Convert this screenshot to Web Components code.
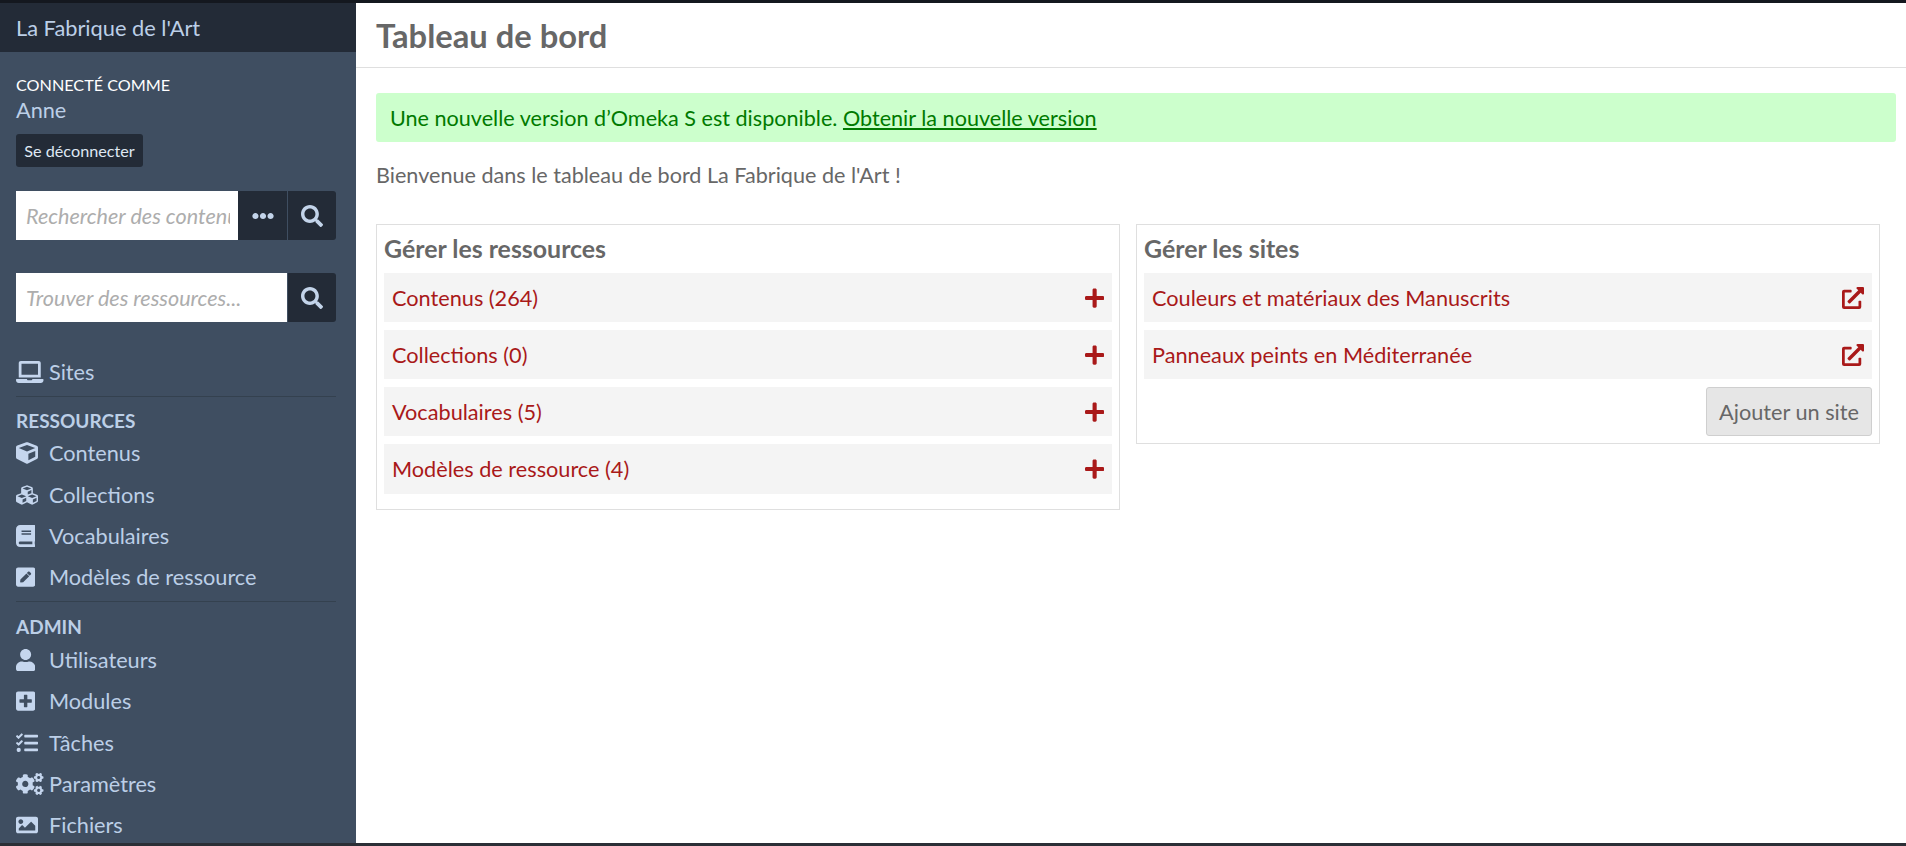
<!DOCTYPE html>
<html lang="fr">
<head>
<meta charset="utf-8">
<title>Tableau de bord</title>
<style>
    html, body { margin: 0; height: 100%; overflow: hidden; background: #fff; }
    body { font-family: Lato, "Open Sans", sans-serif; color: #676767; }
</style>
</head>
<body>
<admin-app>
    <admin-sidebar slot="sidebar" brand="La Fabrique de l'Art" user="Anne">
        <side-search placeholder="Rechercher des contenus" options></side-search>
        <side-search class="second" placeholder="Trouver des ressources..."></side-search>

        <nav-group>
            <nav-item icon="laptop">Sites</nav-item>
        </nav-group>
        <nav-group label="Ressources">
            <nav-item icon="cube">Contenus</nav-item>
            <nav-item icon="cubes">Collections</nav-item>
            <nav-item icon="book">Vocabulaires</nav-item>
            <nav-item icon="pen-square">Modèles de ressource</nav-item>
        </nav-group>
        <nav-group label="Admin">
            <nav-item icon="user">Utilisateurs</nav-item>
            <nav-item icon="plus-square">Modules</nav-item>
            <nav-item icon="tasks">Tâches</nav-item>
            <nav-item icon="cogs">Paramètres</nav-item>
            <nav-item icon="image">Fichiers</nav-item>
        </nav-group>
    </admin-sidebar>

    <page-title>Tableau de bord</page-title>
    <page-body>
        <update-alert link="Obtenir la nouvelle version">Une nouvelle version d’Omeka S est disponible.</update-alert>
        <p>Bienvenue dans le tableau de bord La Fabrique de l'Art !</p>
        <card-grid>
            <dash-card heading="Gérer les ressources">
                <dash-row icon="plus">Contenus (264)</dash-row>
                <dash-row icon="plus">Collections (0)</dash-row>
                <dash-row icon="plus">Vocabulaires (5)</dash-row>
                <dash-row icon="plus" class="tall">Modèles de ressource (4)</dash-row>
            </dash-card>
            <dash-card heading="Gérer les sites">
                <dash-row icon="external">Couleurs et matériaux des Manuscrits</dash-row>
                <dash-row icon="external">Panneaux peints en Méditerranée</dash-row>
                <add-button>Ajouter un site</add-button>
            </dash-card>
        </card-grid>
    </page-body>
</admin-app>

<script>
const ICONS = {
    search: [512, "M505 442.7L405.3 343c-4.5-4.5-10.6-7-17-7H372c27.6-35.3 44-79.7 44-128C416 93.1 322.9 0 208 0S0 93.1 0 208s93.1 208 208 208c48.3 0 92.7-16.4 128-44v16.3c0 6.4 2.5 12.5 7 17l99.7 99.7c9.4 9.4 24.6 9.4 33.9 0l28.3-28.3c9.4-9.4 9.4-24.6.1-34zM208 336c-70.7 0-128-57.2-128-128 0-70.7 57.2-128 128-128 70.7 0 128 57.2 128 128 0 70.7-57.2 128-128 128z"],
    ellipsis: [512, "M328 256c0 39.8-32.2 72-72 72s-72-32.2-72-72 32.2-72 72-72 72 32.2 72 72zm104-72c-39.8 0-72 32.2-72 72s32.2 72 72 72 72-32.2 72-72-32.2-72-72-72zm-352 0c-39.8 0-72 32.2-72 72s32.2 72 72 72 72-32.2 72-72-32.2-72-72-72z"],
    plus: [448, "M416 208H272V64c0-17.67-14.33-32-32-32h-32c-17.67 0-32 14.33-32 32v144H32c-17.67 0-32 14.33-32 32v32c0 17.67 14.33 32 32 32h144v144c0 17.67 14.33 32 32 32h32c17.67 0 32-14.33 32-32V304h144c17.67 0 32-14.33 32-32v-32c0-17.67-14.33-32-32-32z"],
    external: [512, "M432,320H400a16,16,0,0,0-16,16V448H64V128H208a16,16,0,0,0,16-16V80a16,16,0,0,0-16-16H48A48,48,0,0,0,0,112V464a48,48,0,0,0,48,48H400a48,48,0,0,0,48-48V336A16,16,0,0,0,432,320ZM488,0h-128c-21.37,0-32.05,25.91-17,41l35.73,35.73L135,320.37a24,24,0,0,0,0,34L157.67,377a24,24,0,0,0,34,0L435.28,133.32,471,169c15,15,41,4.5,41-17V24A24,24,0,0,0,488,0Z"],
    user: [448, "M224 256c70.7 0 128-57.3 128-128S294.7 0 224 0 96 57.3 96 128s57.3 128 128 128zm89.6 32h-16.7c-22.2 10.2-46.9 16-72.9 16s-50.6-5.8-72.9-16h-16.7C60.2 288 0 348.2 0 422.4V464c0 26.5 21.5 48 48 48h352c26.5 0 48-21.5 48-48v-41.6c0-74.2-60.2-134.4-134.4-134.4z"],
    "plus-square": [448, "M400 32H48C21.5 32 0 53.5 0 80v352c0 26.5 21.5 48 48 48h352c26.5 0 48-21.5 48-48V80c0-26.5-21.5-48-48-48zm-32 252c0 6.6-5.4 12-12 12h-92v92c0 6.6-5.4 12-12 12h-56c-6.6 0-12-5.4-12-12v-92H92c-6.6 0-12-5.4-12-12v-56c0-6.6 5.4-12 12-12h92v-92c0-6.6 5.4-12 12-12h56c6.6 0 12 5.4 12 12v92h92c6.6 0 12 5.4 12 12v56z"],
    laptop: [640, "M624 416H381.54c-.74 19.81-14.71 32-32.74 32H288c-18.69 0-33.02-17.47-32.77-32H16c-8.8 0-16 7.2-16 16v16c0 35.2 28.8 64 64 64h512c35.2 0 64-28.8 64-64v-16c0-8.8-7.2-16-16-16zM576 48c0-26.4-21.6-48-48-48H112C85.6 0 64 21.6 64 48v336h512V48zm-64 272H128V64h384v256z"],
    cube: [512, "M239.1 6.3l-208 78c-18.7 7-31.1 25-31.1 45v225.1c0 18.2 10.3 34.8 26.5 42.9l208 104c13.5 6.8 29.4 6.8 42.9 0l208-104c16.3-8.1 26.5-24.8 26.5-42.9V129.3c0-20-12.4-37.9-31.1-44.9l-208-78C262 2.2 250 2.2 239.1 6.3zM256 68.4l192 72v1.1l-192 78-192-78v-1.1l192-72zm32 356V275.5l160-65v133.9l-160 80z"],
    cubes: [512, "M488.6 250.2L392 214V105.5c0-15-9.3-28.4-23.4-33.7l-100-37.5c-8.1-3.1-17.1-3.1-25.3 0l-100 37.5c-14.1 5.3-23.4 18.7-23.4 33.7V214l-96.6 36.2C9.3 255.5 0 268.9 0 283.9V394c0 13.6 7.7 26.1 19.9 32.2l100 50c10.1 5.1 22.1 5.1 32.2 0l103.9-52 103.9 52c10.1 5.1 22.1 5.1 32.2 0l100-50c12.2-6.1 19.9-18.6 19.9-32.2V283.9c0-15-9.3-28.4-23.4-33.7zM358 214.8l-85 31.9v-68.2l85-37v73.3zM154 104.1l102-38.2 102 38.2v.6l-102 41.4-102-41.4v-.6zm84 291.1l-85 42.5v-79.1l85-38.8v75.4zm0-112l-102 41.4-102-41.4v-.6l102-38.2 102 38.2v.6zm240 112l-85 42.5v-79.1l85-38.8v75.4zm0-112l-102 41.4-102-41.4v-.6l102-38.2 102 38.2v.6z"],
    book: [448, "M448 360V24c0-13.3-10.7-24-24-24H96C43 0 0 43 0 96v320c0 53 43 96 96 96h328c13.3 0 24-10.7 24-24v-16c0-7.5-3.5-14.3-8.9-18.7-4.2-15.4-4.2-59.3 0-74.7 5.4-4.3 8.9-11.1 8.9-18.6zM128 134c0-3.3 2.7-6 6-6h212c3.3 0 6 2.7 6 6v20c0 3.3-2.7 6-6 6H134c-3.3 0-6-2.7-6-6v-20zm0 64c0-3.3 2.7-6 6-6h212c3.3 0 6 2.7 6 6v20c0 3.3-2.7 6-6 6H134c-3.3 0-6-2.7-6-6v-20zm253.4 250H96c-17.7 0-32-14.3-32-32 0-17.6 14.4-32 32-32h285.4c-1.9 17.1-1.9 46.9 0 64z"],
    "pen-square": [448, "M400 480H48c-26.5 0-48-21.5-48-48V80c0-26.5 21.5-48 48-48h352c26.5 0 48 21.5 48 48v352c0 26.5-21.5 48-48 48zM238.1 177.9L102.4 313.6l-6.3 57.1c-.8 7.6 5.6 14.1 13.3 13.3l57.1-6.3L302.2 242c2.3-2.3 2.3-6.1 0-8.5L246.7 178c-2.5-2.4-6.3-2.4-8.6-.1zM345 165.1L314.9 135c-9.4-9.4-24.6-9.4-33.9 0l-23.1 23.1c-2.3 2.3-2.3 6.1 0 8.5l55.5 55.5c2.3 2.3 6.1 2.3 8.5 0L345 199c9.3-9.3 9.3-24.5 0-33.9z"],
    tasks: [512, "M139.61 35.5a12 12 0 0 0-17 0L58.93 98.81l-22.7-22.12a12 12 0 0 0-17 0L3.53 92.41a12 12 0 0 0 0 17l47.59 47.4a12.78 12.78 0 0 0 17.61 0l15.59-15.62L156.52 69a12.09 12.09 0 0 0 .09-17zm0 159.19a12 12 0 0 0-17 0l-63.68 63.72-22.7-22.1a12 12 0 0 0-17 0L3.53 252a12 12 0 0 0 0 17L51 316.5a12.77 12.77 0 0 0 17.6 0l15.7-15.69 72.2-72.22a12 12 0 0 0 .09-16.9zM64 368c-26.49 0-48.59 21.5-48.59 48S37.53 464 64 464a48 48 0 0 0 0-96zm432 16H208a16 16 0 0 0-16 16v32a16 16 0 0 0 16 16h288a16 16 0 0 0 16-16v-32a16 16 0 0 0-16-16zm0-320H208a16 16 0 0 0-16 16v32a16 16 0 0 0 16 16h288a16 16 0 0 0 16-16V80a16 16 0 0 0-16-16zm0 160H208a16 16 0 0 0-16 16v32a16 16 0 0 0 16 16h288a16 16 0 0 0 16-16v-32a16 16 0 0 0-16-16z"],
    cogs: [640, "M512.1 191l-8.2 14.3c-3 5.3-9.4 7.5-15.1 5.4-11.8-4.4-22.6-10.7-32.1-18.6-4.6-3.8-5.8-10.5-2.8-15.7l8.2-14.3c-6.9-8-12.3-17.3-15.9-27.4h-16.5c-6 0-11.2-4.3-12.2-10.3-2-12-2.1-24.6 0-37.1 1-6 6.2-10.4 12.2-10.4h16.5c3.6-10.1 9-19.4 15.9-27.4l-8.2-14.3c-3-5.2-1.9-11.9 2.8-15.7 9.5-7.9 20.4-14.2 32.1-18.6 5.7-2.1 12.1.1 15.1 5.4l8.2 14.3c10.5-1.9 21.2-1.9 31.7 0L552 6.3c3-5.3 9.4-7.5 15.1-5.4 11.8 4.4 22.6 10.7 32.1 18.6 4.6 3.8 5.8 10.5 2.8 15.7l-8.2 14.3c6.9 8 12.3 17.3 15.9 27.4h16.5c6 0 11.2 4.3 12.2 10.3 2 12 2.1 24.6 0 37.1-1 6-6.2 10.4-12.2 10.4h-16.5c-3.6 10.1-9 19.4-15.9 27.4l8.2 14.3c3 5.2 1.9 11.9-2.8 15.7-9.5 7.9-20.4 14.2-32.1 18.6-5.7 2.1-12.1-.1-15.1-5.4l-8.2-14.3c-10.4 1.9-21.2 1.9-31.7 0zm-10.5-58.8c38.5 29.6 82.4-14.3 52.8-52.8-38.5-29.7-82.4 14.3-52.8 52.8zM386.3 286.1l33.7 16.8c10.1 5.8 14.5 18.1 10.5 29.1-8.9 24.2-26.4 46.4-42.6 65.8-7.4 8.9-20.2 11.1-30.3 5.3l-29.1-16.8c-16 13.7-34.6 24.6-54.9 31.7v33.6c0 11.6-8.3 21.6-19.7 23.6-24.6 4.2-50.4 4.4-75.9 0-11.5-2-20-11.9-20-23.6V418c-20.3-7.2-38.9-18-54.9-31.7L74 403c-10 5.8-22.9 3.6-30.3-5.3-16.2-19.4-33.3-41.6-42.2-65.7-4-10.9.4-23.2 10.5-29.1l33.3-16.8c-3.9-20.9-3.9-42.4 0-63.4L12 205.8c-10.1-5.8-14.6-18.1-10.5-29 8.9-24.2 26-46.4 42.2-65.8 7.4-8.9 20.2-11.1 30.3-5.3l29.1 16.8c16-13.7 34.6-24.6 54.9-31.7V57.1c0-11.5 8.2-21.5 19.6-23.5 24.6-4.2 50.5-4.4 76-.1 11.5 2 20 11.9 20 23.6v33.6c20.3 7.2 38.9 18 54.9 31.7l29.1-16.8c10-5.8 22.9-3.6 30.3 5.3 16.2 19.4 33.2 41.6 42.1 65.8 4 10.9.1 23.2-10 29.1l-33.7 16.8c3.9 21 3.9 42.5 0 63.5zm-117.6 21.1c59.2-77-28.7-164.9-105.7-105.7-59.2 77 28.7 164.9 105.7 105.7zm243.4 182.7l-8.2 14.3c-3 5.3-9.4 7.5-15.1 5.4-11.8-4.4-22.6-10.7-32.1-18.6-4.6-3.8-5.8-10.5-2.8-15.7l8.2-14.3c-6.9-8-12.3-17.3-15.9-27.4h-16.5c-6 0-11.2-4.3-12.2-10.3-2-12-2.1-24.6 0-37.1 1-6 6.2-10.4 12.2-10.4h16.5c3.6-10.1 9-19.4 15.9-27.4l-8.2-14.3c-3-5.2-1.9-11.9 2.8-15.7 9.5-7.9 20.4-14.2 32.1-18.6 5.7-2.1 12.1.1 15.1 5.4l8.2 14.3c10.5-1.9 21.2-1.9 31.7 0l8.2-14.3c3-5.3 9.4-7.5 15.1-5.4 11.8 4.4 22.6 10.7 32.1 18.6 4.6 3.8 5.8 10.5 2.8 15.7l-8.2 14.3c6.9 8 12.3 17.3 15.9 27.4h16.5c6 0 11.2 4.3 12.2 10.3 2 12 2.1 24.6 0 37.1-1 6-6.2 10.4-12.2 10.4h-16.5c-3.6 10.1-9 19.4-15.9 27.4l8.2 14.3c3 5.2 1.9 11.9-2.8 15.7-9.5 7.9-20.4 14.2-32.1 18.6-5.7 2.1-12.1-.1-15.1-5.4l-8.2-14.3c-10.4 1.9-21.2 1.9-31.7 0zM501.6 431c38.5 29.6 82.4-14.3 52.8-52.8-38.5-29.6-82.4 14.3-52.8 52.8z"],
    image: [512, "M464 448H48c-26.51 0-48-21.49-48-48V112c0-26.51 21.49-48 48-48h416c26.51 0 48 21.49 48 48v288c0 26.51-21.49 48-48 48zM112 120c-30.928 0-56 25.072-56 56s25.072 56 56 56 56-25.072 56-56-25.072-56-56-56zM64 384h384V272l-87.515-87.515c-4.686-4.686-12.284-4.686-16.971 0L208 320l-55.515-55.515c-4.686-4.686-12.284-4.686-16.971 0L64 336v48z"]
};

// markup for one icon, sized like a font-awesome glyph (height = size)
function icon(name, size) {
    const [w, d] = ICONS[name];
    return `<svg width="${size * w / 512}" height="${size}" viewBox="0 0 ${w} 512" fill="currentColor" aria-hidden="true"><path d="${d}"/></svg>`;
}

function define(tag, html) {
    customElements.define(tag, class extends HTMLElement {
        constructor() {
            super();
            this.attachShadow({ mode: "open" });
        }
        connectedCallback() {
            const attr = name => this.getAttribute(name) || "";
            this.shadowRoot.innerHTML = typeof html === "function" ? html(attr, this) : html;
        }
    });
}

define("admin-app", `
    <style>
        :host {
            display: grid;
            grid-template-columns: 356px 1fr;
            grid-template-rows: auto 1fr;
            height: 846px;
            box-sizing: border-box;
            border-top: 3px solid #14181f;
            border-bottom: 3px solid #2b2f36;
            overflow: hidden;
        }
        .side { grid-row: 1 / 3; min-height: 0; display: flex; }
    </style>
    <div class="side"><slot name="sidebar"></slot></div>
    <slot></slot>
`);

define("admin-sidebar", (attr) => `
    <style>
        :host {
            display: block;
            width: 356px;
            background: #3f4e61;
            color: #bccfe7;
            overflow: hidden;
        }
        header {
            height: 49px;
            background: #232b37;
            padding: 0 16px;
            font-size: 21.8px;
            line-height: 49px;
        }
        .who { padding: 22px 16px 0; }
        .label { font-size: 16.2px; line-height: 22px; color: #fff; text-transform: uppercase; }
        .name { font-size: 21.7px; line-height: 28px; }
        button {
            all: unset;
            display: block;
            margin-top: 10px;
            width: 127px;
            height: 33px;
            box-sizing: border-box;
            text-align: center;
            background: #232b37;
            color: #dfe8f3;
            border-radius: 3px;
            font-size: 16.2px;
            line-height: 33px;
        }
        .rest { padding: 24px 20px 0 16px; }
    </style>
    <header>${attr("brand")}</header>
    <div class="who">
        <div class="label">Connecté comme</div>
        <div class="name">${attr("user")}</div>
        <button>Se déconnecter</button>
    </div>
    <div class="rest"><slot></slot></div>
`);

define("side-search", (attr, el) => `
    <style>
        :host { display: flex; height: 49px; margin-bottom: 33px; }
        :host(.second) { margin-bottom: 29px; }
        input {
            all: unset;
            flex: 1;
            min-width: 0;
            box-sizing: border-box;
            background: #fff;
            padding: 0 8px 0 10px;
            font: italic 21.6px Lato, sans-serif;
            color: #555;
            border-radius: 0;
        }
        input::placeholder { color: #adadad; opacity: 1; }
        .btn {
            display: flex;
            align-items: center;
            justify-content: center;
            background: #232b37;
            color: #c3d4ea;
            width: 48px;
            flex: none;
        }
        .btn.dots { width: 49px; margin-right: 1px; }
        .btn.go { border-radius: 0 3px 3px 0; margin-left: ${el.hasAttribute("options") ? 0 : 1}px; }
    </style>
    <input placeholder="${attr("placeholder")}">
    ${el.hasAttribute("options") ? `<div class="btn dots">${icon("ellipsis", 22)}</div>` : ""}
    <div class="btn go">${icon("search", 22)}</div>
`);

define("nav-group", (attr) => `
    <style>
        :host { display: block; padding-bottom: 3.5px; }
        :host(:not(:last-child)) { border-bottom: 1px solid #34414f; }
        h4 {
            margin: 0;
            padding-top: 12px;
            font-size: 19px;
            line-height: 24px;
            font-weight: 700;
            text-transform: uppercase;
        }
        /* second heading sits a pixel lower than the first */
        :host([label="Admin"]) h4 { padding-top: 13px; }
    </style>
    ${attr("label") ? `<h4>${attr("label")}</h4>` : ""}
    <slot></slot>
`);

define("nav-item", (attr) => `
    <style>
        :host {
            display: flex;
            align-items: center;
            height: 41.3px;
            font-size: 21.7px;
            color: #bccfe7;
        }
        .ico { width: 33px; flex: none; display: flex; color: #c5d6ee; }
    </style>
    <span class="ico">${icon(attr("icon"), 22)}</span><slot></slot>
`);

define("page-title", `
    <style>
        :host {
            display: block;
            height: 65px;
            box-sizing: border-box;
            border-bottom: 1px solid #dfdfdf;
            padding-left: 20px;
            font-size: 32.7px;
            font-weight: 700;
            line-height: 65px;
            color: #676767;
        }
    </style>
    <slot></slot>
`);

define("page-body", `
    <style>
        :host { display: block; padding: 25px 10px 0 20px; font-size: 21.6px; color: #676767; }
        ::slotted(p) { margin: 21px 0 0; line-height: 24px; }
    </style>
    <slot></slot>
`);

define("update-alert", (attr) => `
    <style>
        :host {
            display: block;
            height: 49px;
            padding: 0 14px;
            background: #ccffcc;
            border-radius: 3px;
            color: #007a00;
            font-size: 21.6px;
            line-height: 50px;
        }
        a { color: inherit; }
    </style>
    <slot></slot> <a href="#">${attr("link")}</a>
`);

define("card-grid", `
    <style>
        :host { display: grid; grid-template-columns: 744px 744px; gap: 16px; margin-top: 37px; align-items: start; }
    </style>
    <slot></slot>
`);

define("dash-card", (attr) => `
    <style>
        :host {
            display: block;
            box-sizing: border-box;
            border: 1px solid #dfdfdf;
            padding: 0 7px 15px;
        }
        h2 {
            margin: 0;
            height: 48px;
            font-size: 24.9px;
            line-height: 46px;
            font-weight: 700;
            color: #676767;
        }
        .list { display: flex; flex-direction: column; gap: 8px; }
    </style>
    <h2>${attr("heading")}</h2>
    <div class="list"><slot></slot></div>
`);

define("dash-row", (attr) => `
    <style>
        :host {
            display: flex;
            align-items: center;
            justify-content: space-between;
            height: 49px;
            padding: 0 8px;
            background: #f4f4f4;
            color: #a91919;
            font-size: 21.7px;
        }
        :host(.tall) { height: 50px; }
        svg { display: block; }
    </style>
    <span><slot></slot></span>${icon(attr("icon"), 22)}
`);

define("add-button", `
    <style>
        :host {
            display: block;
            align-self: flex-end;
            box-sizing: border-box;
            height: 49px;
            margin-bottom: -8px;
            padding: 0 12px;
            background: #e6e6e6;
            border: 1px solid #cfcfcf;
            border-radius: 3px;
            font-size: 21.7px;
            line-height: 48px;
            color: #676767;
        }
    </style>
    <slot></slot>
`);
</script>
</body>
</html>
